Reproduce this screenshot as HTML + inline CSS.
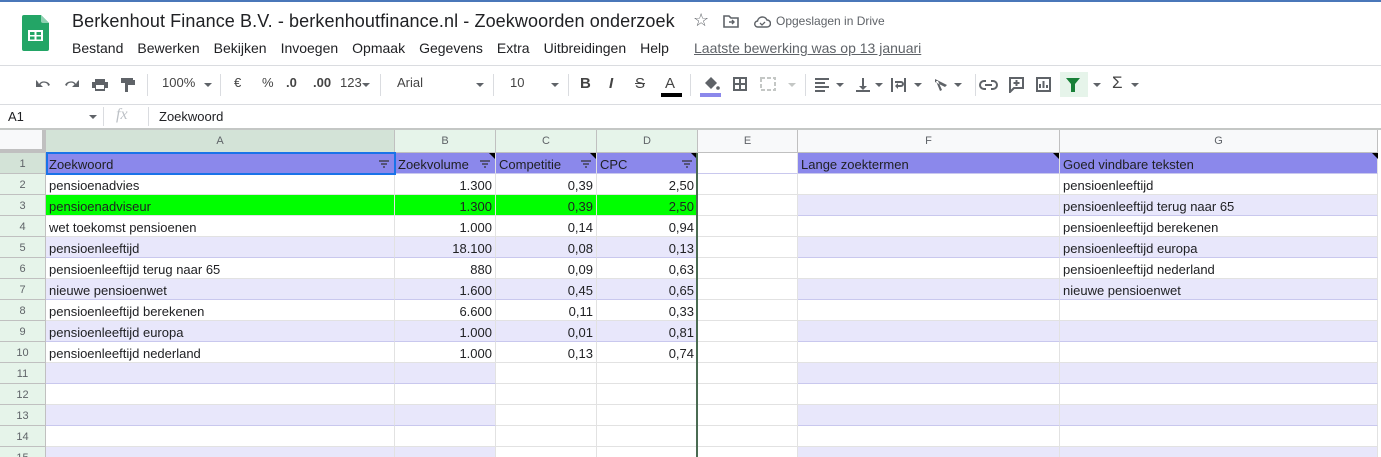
<!DOCTYPE html>
<html><head><meta charset="utf-8"><style>
*{margin:0;padding:0;box-sizing:border-box}
html,body{width:1381px;height:457px;overflow:hidden}
body{background:#fff;font-family:"Liberation Sans",Arial,sans-serif;position:relative;color:#202124}
.a{position:absolute;white-space:nowrap}
.menu span{margin-right:14px}
.tb{position:absolute;top:75px;font-size:13px;color:#444}
.sep{position:absolute;top:74px;width:1px;height:22px;background:#dadce0}
.dd{position:absolute;top:83px;width:0;height:0;border-left:4px solid transparent;border-right:4px solid transparent;border-top:4px solid #5f6368}
.cell{position:absolute;font-size:13px;line-height:24px;height:21px;overflow:hidden;white-space:nowrap;padding:0 3px}
.r{text-align:right}
</style></head><body>
<div class="a" style="left:0;top:0;width:1381px;height:2px;background:#4a77b9"></div>
<svg class="a" style="left:22px;top:15px" width="27" height="36" viewBox="0 0 27 36"><path d="M2 0h17l8 8v26a2 2 0 0 1-2 2H2a2 2 0 0 1-2-2V2a2 2 0 0 1 2-2z" fill="#23a566"/><path d="M19 0l8 8h-6a2 2 0 0 1-2-2z" fill="#8ed1b1"/><rect x="6" y="15" width="15" height="11" fill="#fff"/><rect x="8" y="17" width="4.5" height="3" fill="#23a566"/><rect x="14.5" y="17" width="4.5" height="3" fill="#23a566"/><rect x="8" y="21.5" width="4.5" height="3" fill="#23a566"/><rect x="14.5" y="21.5" width="4.5" height="3" fill="#23a566"/></svg>
<div class="a" style="left:72px;top:11px;font-size:18px;letter-spacing:0.1px;color:#202124">Berkenhout Finance B.V. - berkenhoutfinance.nl - Zoekwoorden onderzoek</div>
<div class="a" style="left:693px;top:10px;font-size:18px;color:#5f6368">☆</div>
<svg class="a" style="left:723px;top:14px" width="17" height="14"><path d="M1 2h5l2 2h7v9H1z" fill="none" stroke="#5f6368" stroke-width="1.6"/><path d="M6 8h5M9 6l2 2-2 2" fill="none" stroke="#5f6368" stroke-width="1.4"/></svg>
<svg class="a" style="left:753px;top:15px" width="18" height="13"><path d="M5 12h9a3.5 3.5 0 0 0 0-7 5 5 0 0 0-9.5 1A3 3 0 0 0 5 12z" fill="none" stroke="#5f6368" stroke-width="1.5"/><path d="M7 8l2 2 3-3" fill="none" stroke="#5f6368" stroke-width="1.3"/></svg>
<div class="a" style="left:776px;top:14px;font-size:12px;color:#5f6368">Opgeslagen in Drive</div>
<div class="a menu" style="left:72px;top:40px;font-size:14px;color:#202124"><span>Bestand</span><span>Bewerken</span><span>Bekijken</span><span>Invoegen</span><span>Opmaak</span><span>Gegevens</span><span>Extra</span><span>Uitbreidingen</span><span>Help</span></div>
<div class="a" style="left:694px;top:40px;font-size:14px;color:#5f6368;text-decoration:underline">Laatste bewerking was op 13 januari</div>
<div class="a" style="left:0;top:65px;width:1381px;height:1px;background:#dadce0"></div>
<svg class="a" style="left:35px;top:77px" width="110" height="16" fill="#5f6368">
<path d="M4 7a6 5 0 0 1 11 1l-2 1a4 3.5 0 0 0-7.5-1.5L8 10H1V3l2 2z"/>
<path d="M41 7a6 5 0 0 0-11 1l2 1a4 3.5 0 0 1 7.5-1.5L37 10h7V3l-2 2z"/>
<path d="M60 2h10v3H60z M57 5h16v6h-3v3H60v-3h-3z"/><rect x="61" y="8" width="8" height="4" fill="#fff"/>
<path d="M86 1h12v5H86z M98 3h2v5h-7v7h-3V6h7V3"/></svg>
<div class="sep" style="left:147px"></div>
<div class="tb" style="left:162px">100%</div><div class="dd" style="left:204px"></div>
<div class="sep" style="left:220px"></div>
<div class="tb" style="left:234px">€</div><div class="tb" style="left:262px">%</div>
<div class="tb" style="left:286px;font-weight:bold">.0</div><div class="tb" style="left:313px;font-weight:bold">.00</div>
<div class="tb" style="left:340px">123</div><div class="dd" style="left:362px"></div>
<div class="sep" style="left:380px"></div>
<div class="tb" style="left:397px">Arial</div><div class="dd" style="left:476px"></div>
<div class="sep" style="left:493px"></div>
<div class="tb" style="left:510px">10</div><div class="dd" style="left:551px"></div>
<div class="sep" style="left:568px"></div>
<div class="tb" style="left:580px;font-size:15px;font-weight:bold">B</div>
<div class="tb" style="left:609px;font-size:15px;font-style:italic;font-weight:bold">I</div>
<div class="tb" style="left:635px;font-size:15px;text-decoration:line-through">S</div>
<div class="tb" style="left:665px;font-size:15px">A</div>
<div class="a" style="left:661px;top:93px;width:21px;height:4px;background:#000"></div>
<div class="sep" style="left:690px"></div>
<svg class="a" style="left:701px;top:76px" width="20" height="15"><path d="M4 7l6-6 6 6-6 6z" fill="#5f6368"/><circle cx="17" cy="12" r="1.8" fill="#5f6368"/></svg>
<div class="a" style="left:700px;top:93px;width:21px;height:4px;background:#8b88eb"></div>
<svg class="a" style="left:733px;top:77px" width="14" height="14"><path d="M1 1h12v12H1zM7 1v12M1 7h12" fill="none" stroke="#5f6368" stroke-width="2"/></svg>
<svg class="a" style="left:760px;top:77px" width="16" height="14"><path d="M1 1h14v12H1z" fill="none" stroke="#c4c7c5" stroke-width="2" stroke-dasharray="4 2"/></svg>
<div class="dd" style="left:788px;border-top-color:#c4c7c5"></div>
<div class="sep" style="left:805px"></div>
<svg class="a" style="left:815px;top:78px" width="150" height="14" fill="#5f6368"><rect x="0" y="0" width="14" height="2"/><rect x="0" y="4" width="10" height="2"/><rect x="0" y="8" width="14" height="2"/><rect x="0" y="12" width="10" height="2"/><path d="M47 0h2v8h3l-4 4-4-4h3z M41 12h14v2H41z"/><path d="M76 0h2v14h-2z M80 3h6a3 3 0 0 1 0 6h-3v2l-3-3 3-3v2h3a1 1 0 0 0 0-2h-6z M89 0h2v14h-2z"/><path d="M120 1l12 6-2 2-10-5z M121 3l4 10 2-1-4-9z" /></svg>
<div class="dd" style="left:836px"></div><div class="dd" style="left:875px"></div><div class="dd" style="left:914px"></div><div class="dd" style="left:954px"></div>
<div class="sep" style="left:975px"></div>
<svg class="a" style="left:979px;top:77px" width="160" height="16" fill="none" stroke="#5f6368" stroke-width="2"><path d="M7 4H5a4 4 0 0 0 0 8h2M12 4h2a4 4 0 0 1 0 8h-2M6 8h7"/><path d="M31 1h13v10h-9l-4 4z M37.5 3v6M34.5 6h6" /><path d="M58 1h13v13H58z M61 11V7M64.5 11V4M68 11V8"/></svg>
<div class="a" style="left:1060px;top:72px;width:28px;height:25px;background:#e6f4ea"></div>
<svg class="a" style="left:1066px;top:78px" width="14" height="14"><path d="M0 0h14l-5 6v8H5V6z" fill="#188038"/></svg>
<div class="dd" style="left:1093px"></div>
<div class="tb" style="left:1112px;font-size:17px;top:73px">Σ</div><div class="dd" style="left:1131px"></div>
<div class="a" style="left:0;top:104px;width:1381px;height:1px;background:#dadce0"></div>
<div class="a" style="left:8px;top:109px;font-size:13px">A1</div><div class="dd" style="left:89px;top:115px"></div>
<div class="a" style="left:103px;top:107px;width:1px;height:19px;background:#dadce0"></div>
<div class="a" style="left:116px;top:106px;font-size:16px;font-style:italic;color:#bdc1c6;font-family:'Liberation Serif',serif">fx</div>
<div class="a" style="left:148px;top:107px;width:1px;height:19px;background:#dadce0"></div>
<div class="a" style="left:159px;top:109px;font-size:13px">Zoekwoord</div>
<div class="a" style="left:0;top:128px;width:1381px;height:2px;background:#c4c7c5"></div>
<div id="grid"></div>
<script>
var cols=[46,395,496,597,698,798,1060,1378];
var letters="ABCDEFG";
var h='';
h+='<div class="a" style="left:0;top:130px;width:46px;height:23px;background:#f8f9fa;border-right:4px solid #c0c0c0;border-bottom:4px solid #c0c0c0"></div>';
for(var i=0;i<7;i++){var bg=i==0?'#d3e3d7':(i<4?'#e6f4ea':'#f8f9fa');
h+='<div class="a" style="left:'+cols[i]+'px;top:130px;width:'+(cols[i+1]-cols[i])+'px;height:23px;background:'+bg+';border-right:1px solid #c0c0c0;border-bottom:1px solid #c0c0c0;text-align:center;font-size:11px;line-height:23px;color:#5f6368">'+letters[i]+'</div>';}
var A=['Zoekwoord','pensioenadvies','pensioenadviseur','wet toekomst pensioenen','pensioenleeftijd','pensioenleeftijd terug naar 65','nieuwe pensioenwet','pensioenleeftijd berekenen','pensioenleeftijd europa','pensioenleeftijd nederland'];
var B=['Zoekvolume','1.300','1.300','1.000','18.100','880','1.600','6.600','1.000','1.000'];
var C=['Competitie','0,39','0,39','0,14','0,08','0,09','0,45','0,11','0,01','0,13'];
var D=['CPC','2,50','2,50','0,94','0,13','0,63','0,65','0,33','0,81','0,74'];
var G=['Goed vindbare teksten','pensioenleeftijd','pensioenleeftijd terug naar 65','pensioenleeftijd berekenen','pensioenleeftijd europa','pensioenleeftijd nederland','nieuwe pensioenwet'];
for(var r=1;r<=15;r++){var y=153+(r-1)*21;
h+='<div class="a" style="left:0;top:'+y+'px;width:46px;height:21px;background:'+(r==1?'#d3e3d7':'#e6f4ea')+';border-right:1px solid #c0c0c0;border-bottom:1px solid #c0c0c0;text-align:center;font-size:11px;line-height:22px;color:#5f6368">'+r+'</div>';
for(var c=0;c<7;c++){var bg='#fff',bd='#e2e2e2';
 if(r==1){bg=(c==4)?'#fff':'#8b88eb';}
 else if(r%2==1){ if(c==4) bg='#fff'; else if(r<=10 || c<2 || c>4) bg='#e8e7fb'; }
 if(r==3&&c<4)bg='#00ff00';
 if(bg=='#e8e7fb'||r==1)bd='#c9c8ee';
 var txt='',cls='cell';
 if(r<=10){ if(c==0)txt=A[r-1]; if(c==1)txt=B[r-1]; if(c==2)txt=C[r-1]; if(c==3)txt=D[r-1]; if(c>0&&c<4&&r>1)cls+=' r';}
 if(c==5&&r==1)txt='Lange zoektermen';
 if(c==6&&r<=7)txt=G[r-1];
 h+='<div class="'+cls+'" style="left:'+cols[c]+'px;top:'+y+'px;width:'+(cols[c+1]-cols[c])+'px;background:'+bg+';border-right:1px solid #e2e2e2;border-bottom:1px solid '+bd+'">'+txt+'</div>';
}}
var fx=[384,485,586,687];
fx.forEach(function(x){h+='<svg class="a" style="left:'+(x-6)+'px;top:159px" width="12" height="10" stroke="#333" stroke-width="1.2"><path d="M1 2h10M3 5h6M5 8h2"/></svg>';});
[495,596,697,1059,1378].forEach(function(x){h+='<div class="a" style="left:'+(x-6)+'px;top:153px;width:0;height:0;border-left:6px solid transparent;border-top:6px solid #000"></div>';});
h+='<div class="a" style="left:46px;top:152px;width:350px;height:23px;border:2px solid #1a73e8"></div>';
h+='<div class="a" style="left:696px;top:153px;width:2px;height:304px;background:#4a6b52"></div>';
h+='<div class="a" style="left:1378px;top:130px;width:3px;height:327px;background:#fff"></div>';
document.getElementById('grid').innerHTML=h;
</script>
</body></html>
